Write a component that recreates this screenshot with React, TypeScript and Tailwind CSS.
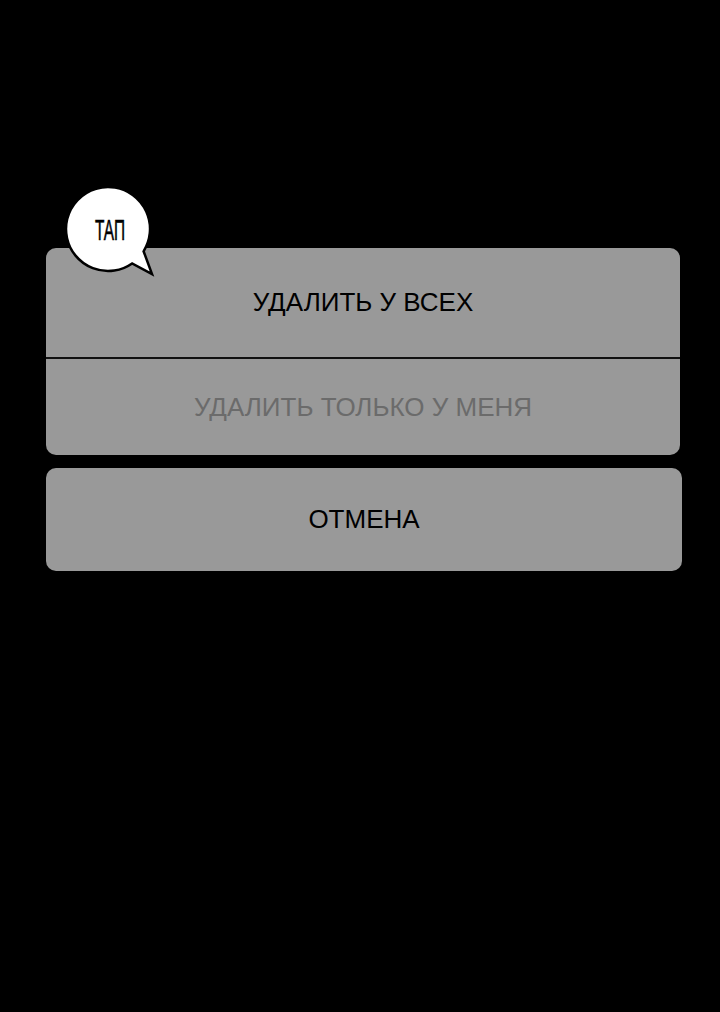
import React from "react";

const font = { fontFamily: '"Liberation Sans", Arial, sans-serif' };

const TapBubble: React.FC = () => (
  <svg
    className="absolute left-0 top-0"
    width={200}
    height={300}
    viewBox="0 0 200 300"
  >
    <path
      d="M 143.6 251.3 A 42 42 0 1 0 132.1 263.4 L 152 274 Z"
      fill="#ffffff"
      stroke="#000000"
      strokeWidth={2.5}
      strokeLinejoin="miter"
    />
    <text
      x={95}
      y={240}
      fontSize={29}
      fontFamily='"Liberation Sans", Arial, sans-serif'
      textLength={30}
      lengthAdjust="spacingAndGlyphs"
      fill="#000000"
      stroke="#000000"
      strokeWidth={0.6}
    >
      ТАП
    </text>
  </svg>
);

const App: React.FC = () => {
  return (
    <div className="relative w-[720px] h-[1012px] bg-black overflow-hidden" style={font}>
      <div className="flex flex-col pt-[248px] pl-[46px]">
        <div className="w-[634px] rounded-[10px] bg-[#999999] overflow-hidden flex flex-col">
          <button className="h-[109px] flex items-center justify-center text-[26px] text-black">
            УДАЛИТЬ У ВСЕХ
          </button>
          <div className="h-[2px] bg-[#111111]" />
          <button className="h-[96px] flex items-center justify-center text-[26px] text-[#6b6b6b]">
            УДАЛИТЬ ТОЛЬКО У МЕНЯ
          </button>
        </div>
        <button className="mt-[13px] w-[636px] h-[103px] rounded-[10px] bg-[#999999] flex items-center justify-center text-[26px] text-black">
          ОТМЕНА
        </button>
      </div>
      <TapBubble />
    </div>
  );
};

export default App;
